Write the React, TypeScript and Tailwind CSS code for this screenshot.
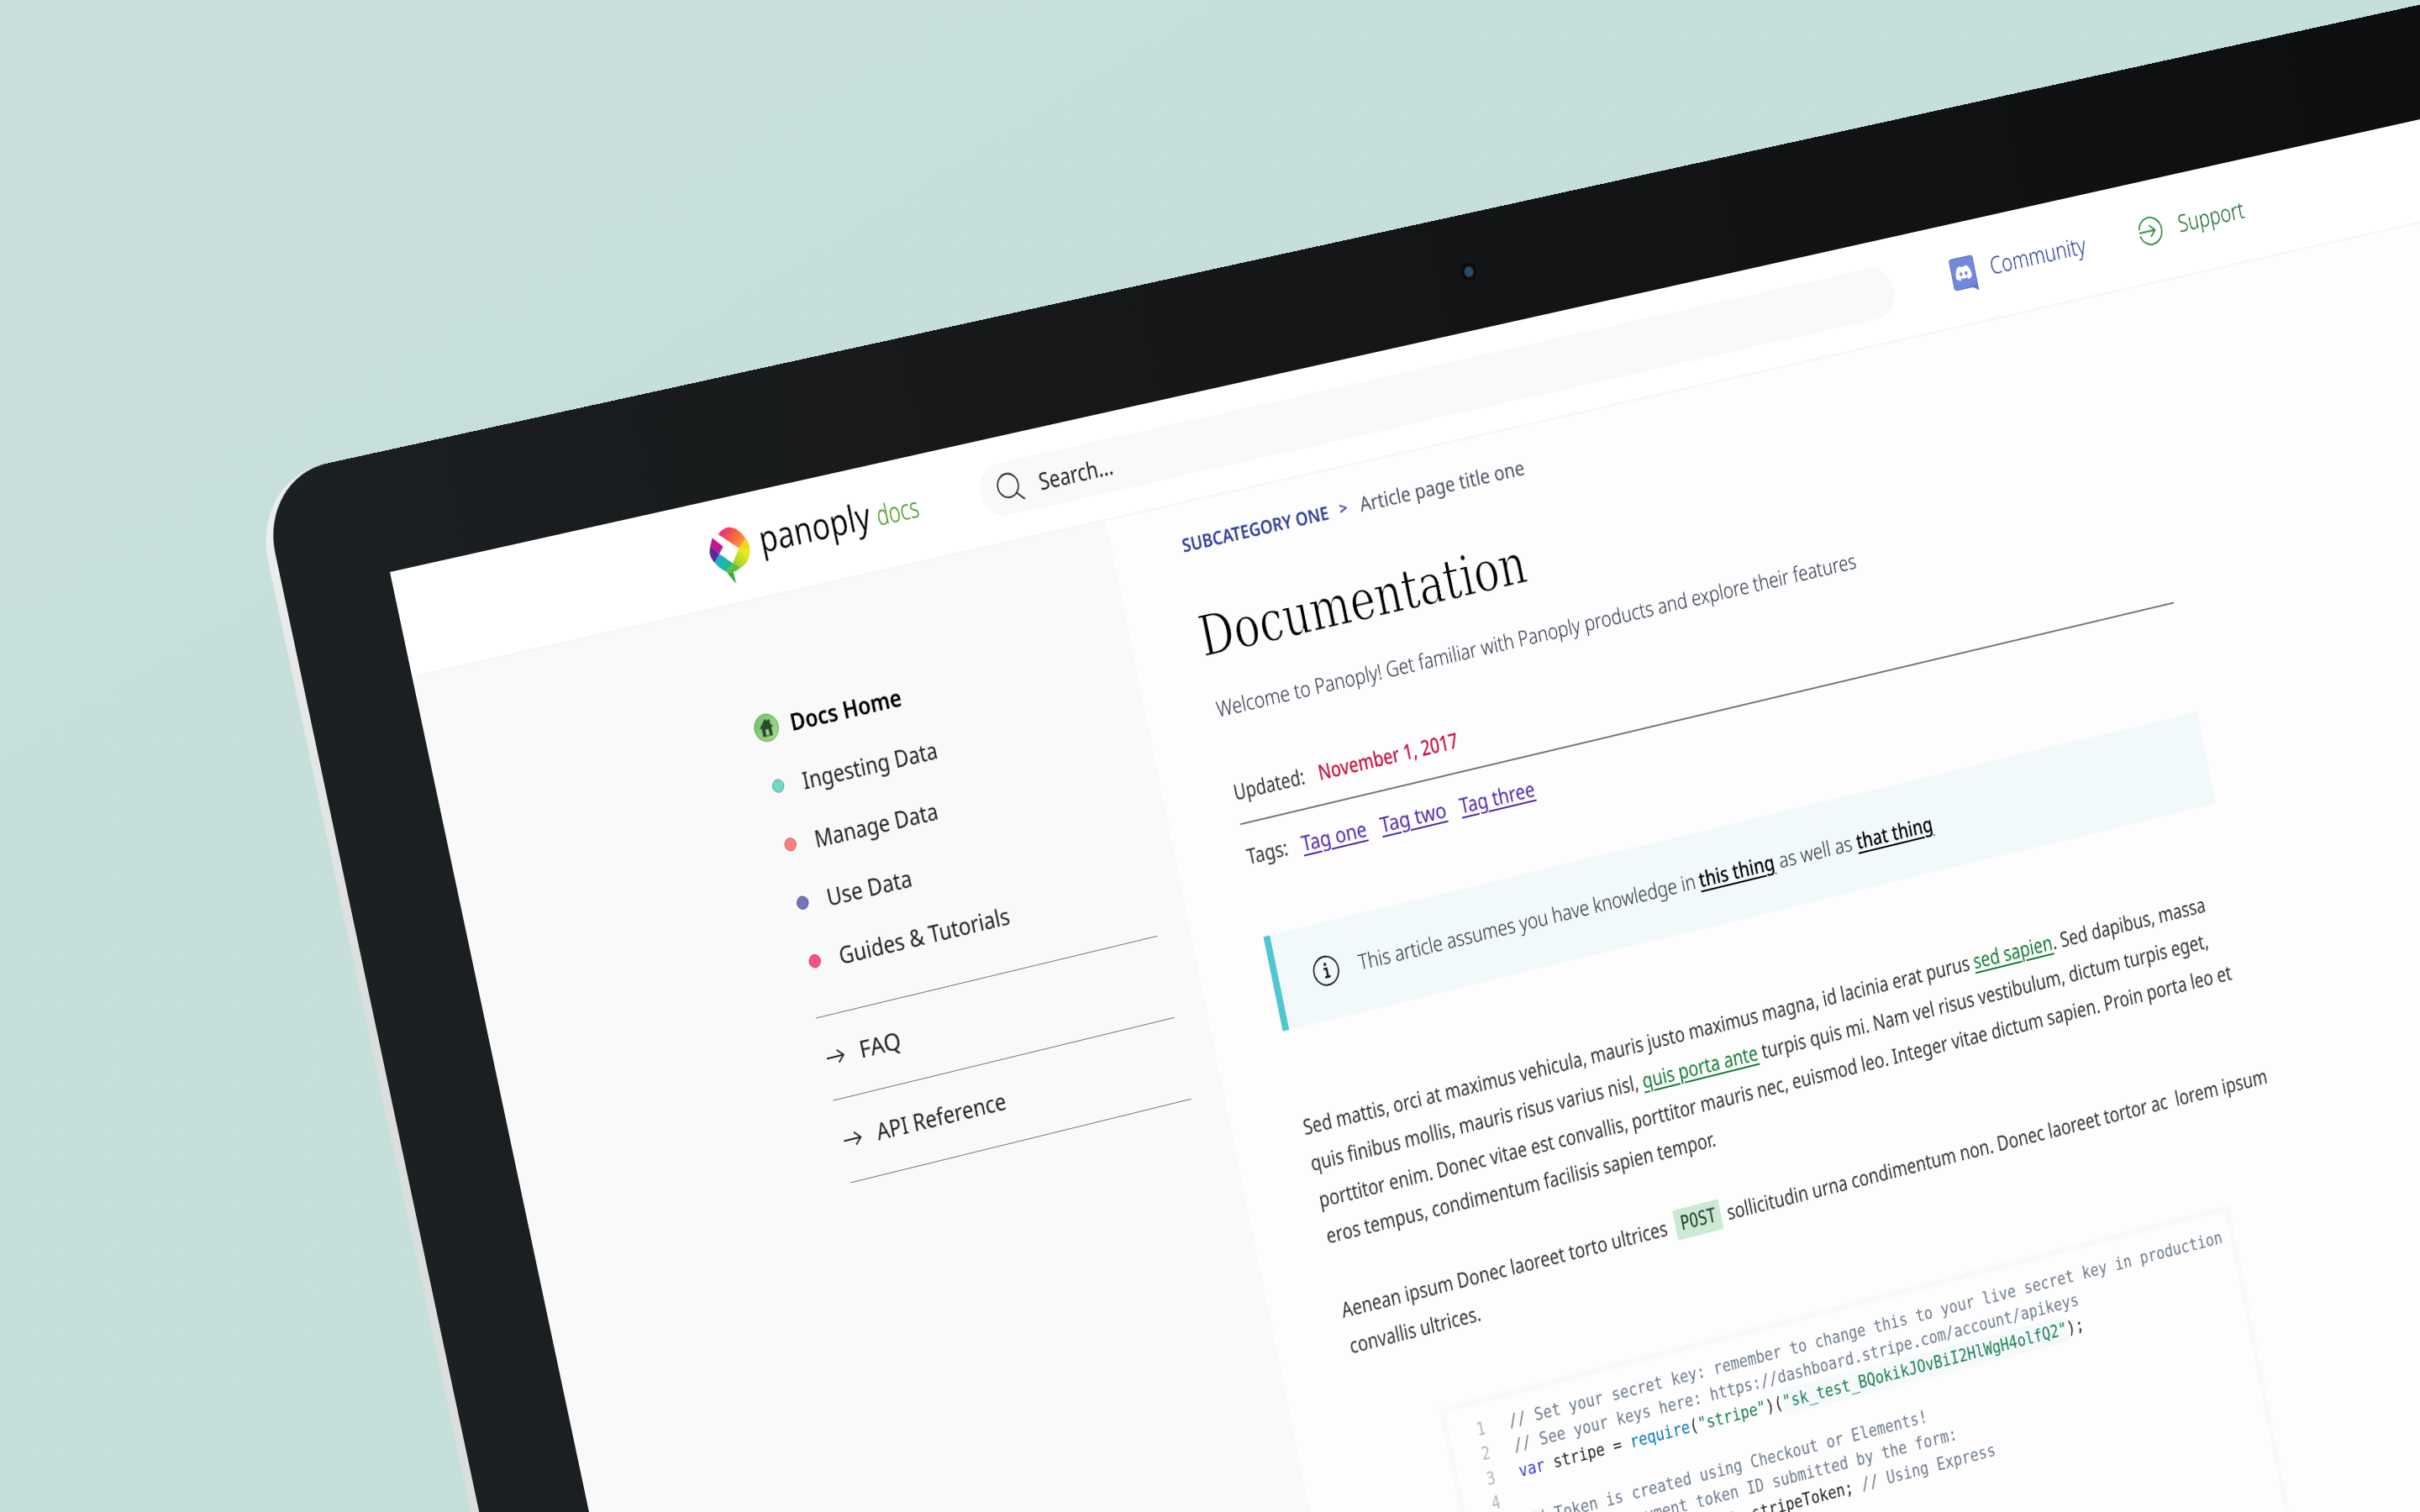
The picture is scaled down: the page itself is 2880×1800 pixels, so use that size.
import React, { useLayoutEffect, useRef } from "react";
import { FaDiscord } from "react-icons/fa";

type Point = [number, number];

/* Size of the flat area that is projected onto the four corner points. */
const PLANE_W = 2300;
const PLANE_H = 1250;
const CORNERS: [Point, Point, Point, Point] = [
  [464, 681],
  [2416.3, 245.4],
  [2652.3, 1435],
  [728.8, 1931.4],
];

/* Projective transform that carries the flat rectangle onto a quadrilateral. */
function projection(w: number, h: number, [p0, p1, p2, p3]: typeof CORNERS) {
  const dx1 = p1[0] - p2[0];
  const dx2 = p3[0] - p2[0];
  const dy1 = p1[1] - p2[1];
  const dy2 = p3[1] - p2[1];
  const sx = p0[0] - p1[0] + p2[0] - p3[0];
  const sy = p0[1] - p1[1] + p2[1] - p3[1];
  const det = dx1 * dy2 - dx2 * dy1;
  const g = (sx * dy2 - dx2 * sy) / det;
  const k = (dx1 * sy - sx * dy1) / det;
  const a = (p1[0] - p0[0] + g * p1[0]) / w;
  const b = (p3[0] - p0[0] + k * p3[0]) / h;
  const d = (p1[1] - p0[1] + g * p1[1]) / w;
  const e = (p3[1] - p0[1] + k * p3[1]) / h;
  return `matrix3d(${a},${d},0,${g / w},${b},${e},0,${k / h},0,0,1,0,${p0[0]},${p0[1]},0,1)`;
}

/* One line of text, condensed or widened to the width of its box. */
function Fit({ className = "", children }: { className?: string; children: React.ReactNode }) {
  const box = useRef<HTMLDivElement>(null);
  const text = useRef<HTMLSpanElement>(null);
  useLayoutEffect(() => {
    if (box.current && text.current) {
      const s = box.current.clientWidth / text.current.offsetWidth;
      text.current.style.transform = `scaleX(${s})`;
    }
  }, []);
  return (
    <div ref={box} className={`flex shrink-0 ${className}`}>
      <span ref={text} className="shrink-0 origin-left whitespace-pre">
        {children}
      </span>
    </div>
  );
}

function Logo() {
  return (
    <svg className="h-[66px] w-[54px] overflow-visible" viewBox="0 0 54 66">
      <defs>
        <linearGradient id="warm" x1="0" y1="0" x2="1" y2="1">
          <stop offset="0" stopColor="#f0148c" />
          <stop offset=".5" stopColor="#f7653f" />
          <stop offset="1" stopColor="#fbb03b" />
        </linearGradient>
        <linearGradient id="lime" x1="1" y1="0" x2="0" y2="1">
          <stop offset="0" stopColor="#fdf100" />
          <stop offset=".4" stopColor="#e6e61e" />
          <stop offset="1" stopColor="#7cc142" />
        </linearGradient>
        <linearGradient id="sea" x1="0" y1="0" x2="1" y2="1">
          <stop offset="0" stopColor="#1aa9d6" />
          <stop offset=".6" stopColor="#1cb9a8" />
          <stop offset="1" stopColor="#35b04a" />
        </linearGradient>
      </defs>
      <path d="M16.4 5.5Q23 0 31 0Q44 2 50.9 17.3L39.6 26.4Z" fill="url(#warm)" />
      <path d="M39.6 26.4L50.9 17.3Q54.5 23 53.6 29.5Q51 46 35 49.5Q30 52 25.8 52.1L27.5 42Z" fill="url(#lime)" />
      <path d="M50.9 17.3Q54.5 23 53.6 29.5L39.6 26.4Z" fill="#f7c928" fillOpacity=".7" />
      <path d="M7.8 8.1L19.6 20.8L12.5 28.1L3.1 16.5Z" fill="#c4178f" />
      <path d="M3.1 16.5L12.5 28.1L4.2 37.1Q.5 32 .2 25.6Q.6 21 3.1 16.5Z" fill="#5a2a94" />
      <path d="M12.5 28.1L27.5 42L16.5 49.9Q8 44 4.2 37.1Z" fill="url(#sea)" />
      <path d="M27.5 42L36 49.2Q31 52 25.8 52.1L26.3 65.9L16.5 49.9Z" fill="#5bbd45" />
      <path d="M25.8 52.1L26.3 65.9L19 54Z" fill="#3da53a" />
    </svg>
  );
}

function Arrow() {
  return (
    <svg className="h-[18px] w-[24px]" viewBox="0 0 24 18" fill="none" stroke="#222" strokeWidth="1.8">
      <path d="M0 9H23M15 1.5L23 9L15 16.5" />
    </svg>
  );
}

function HomeIcon() {
  return (
    <svg className="size-[33px]" viewBox="0 0 33 33">
      <defs>
        <linearGradient id="leaf" x1="0" y1="0" x2="1" y2="1">
          <stop offset="0" stopColor="#6fbf6b" />
          <stop offset="1" stopColor="#a9dd8f" />
        </linearGradient>
      </defs>
      <circle cx="16.5" cy="16.5" r="16" fill="url(#leaf)" stroke="#5e9a56" strokeWidth="1" />
      <path d="M16.5 6L7 16.5H10V26.5H23V16.5H26L22.5 12.6V7.5H19.5V9.3Z" fill="#2b4a2c" />
      <path d="M14.5 18.5h4.4v7h-4.4z" fill="#9ad58a" />
    </svg>
  );
}

const NAV = [
  { label: "Ingesting Data", dot: "bg-[#72d7c6] border-[#4fa598]", w: "w-[184px]" },
  { label: "Manage Data", dot: "bg-[#f98080] border-[#c95f5f]", w: "w-[168px]" },
  { label: "Use Data", dot: "bg-[#7474bb] border-[#484890]", w: "w-[116px]" },
  { label: "Guides & Tutorials", dot: "bg-[#f7508a] border-[#c23265]", w: "w-[234px]" },
];

const LINKS = [
  { label: "FAQ", w: "w-[56px]" },
  { label: "API Reference", w: "w-[178px]" },
];

function Header() {
  return (
    <header className="flex h-[125px] shrink-0 items-center border-b-2 border-[#f5f5f5] bg-white pl-[415px]">
      <div className="pt-[12px]">
        <Logo />
      </div>
      <Fit className="-mt-[11px] ml-[14px] w-[151px] text-[44px] leading-[60px] font-normal text-black [-webkit-text-stroke:0.5px_#ffffff]">
        panoply
      </Fit>
      <Fit className="-mt-[4px] ml-[9px] w-[57px] text-[33px] leading-[60px] font-light text-[#3f8f14]">docs</Fit>
      <div className="ml-[85px] flex h-[62px] w-[1299px] items-center rounded-full bg-[#f9f9f9] pl-[24px]">
        <svg className="size-[35px]" viewBox="0 0 35 35" fill="none" stroke="#222" strokeWidth="1.8">
          <circle cx="15" cy="15" r="14" />
          <path d="M24.5 25.5L34 35" />
        </svg>
        <Fit className="ml-[22px] w-[102px] text-[28px] text-[#222]">Search...</Fit>
      </div>
      <div className="ml-[86px] flex items-center">
        <div className="relative flex h-[37px] w-[33px] items-center justify-center rounded-[3px] bg-[#7289da] ring-1 ring-[#5a6fc4]">
          <FaDiscord className="size-[25px] text-white" />
          <svg className="absolute -right-px -bottom-[6px] h-[8px] w-[11px]" viewBox="0 0 11 8">
            <path d="M0 1L11 8V0Z" fill="#6077cf" />
          </svg>
        </div>
        <Fit className="-mt-[3px] ml-[23px] w-[141px] text-[29px] font-light text-[#26389a]">Community</Fit>
      </div>
      <div className="ml-[79px] flex items-center">
        <svg className="size-[35px]" viewBox="0 0 34 34" fill="none" stroke="#2b8038" strokeWidth="1.8">
          <path d="M1.4 13.5A16 16 0 1 1 1.4 20.5M1 17H23M16.5 10L23.5 17L16.5 24" />
        </svg>
        <Fit className="-mt-[3px] ml-[24px] w-[98px] text-[29px] font-light text-[#0f651e]">Support</Fit>
      </div>
    </header>
  );
}

function Sidebar() {
  return (
    <aside className="w-[944px] shrink-0 bg-[#f9f9f9] pt-[113px] text-[28px] text-[#222]">
      <nav className="ml-[424px]">
        <div className="flex h-[70px] items-center">
          <div className="flex w-[34px] justify-center">
            <HomeIcon />
          </div>
          <Fit className="ml-[16px] w-[152px] font-semibold text-black">Docs Home</Fit>
        </div>
        {NAV.map((n) => (
          <div key={n.label} className="flex h-[70px] items-center">
            <div className="flex w-[34px] justify-center">
              <span className={`size-[16px] rounded-full border ${n.dot}`} />
            </div>
            <Fit className={`ml-[16px] ${n.w}`}>{n.label}</Fit>
          </div>
        ))}
      </nav>
      <div className="mt-[30px] ml-[427px] w-[472px] border-t-[1.5px] border-[#777]">
        {LINKS.map((n) => (
          <div key={n.label} className="flex h-[99px] items-center border-b-[1.5px] border-[#777] pb-[4px]">
            <div className="flex w-[31px] items-center pt-[3px] pl-[3px]">
              <Arrow />
            </div>
            <Fit className={`ml-[17px] ${n.w}`}>{n.label}</Fit>
          </div>
        ))}
      </div>
    </aside>
  );
}

function Green({ children }: { children: React.ReactNode }) {
  return <span className="text-[#0f7a30] underline decoration-[1.5px] underline-offset-[4px]">{children}</span>;
}

const TAGS = [
  { label: "Tag one", w: "w-[91px]" },
  { label: "Tag two", w: "w-[93px]" },
  { label: "Tag three", w: "w-[107px]" },
];

function C({ children }: { children: React.ReactNode }) {
  return <span className="text-[#6d7b8d]">{children}</span>;
}

const CODE: React.ReactNode[] = [
  <C>// Set your secret key: remember to change this to your live secret key in production</C>,
  <C>// See your keys here: https://dashboard.stripe.com/account/apikeys</C>,
  <>
    <span className="text-[#3d3ddb]">var</span> stripe = <span className="text-[#0a76b8]">require</span>(
    <span className="text-[#15804d]">"stripe"</span>)(
    <span className="bg-[#f6f9fb] py-[4px] text-[#15804d]">"sk_test_BQokikJOvBiI2HlWgH4olfQ2"</span>);
  </>,
  " ",
  <C>// Token is created using Checkout or Elements!</C>,
  <C>// Get the payment token ID submitted by the form:</C>,
  <>
    <span className="text-[#3d3ddb]">var</span> token = request.body.stripeToken; <C>// Using Express</C>
  </>,
];

function Code() {
  return (
    <div className="mt-[77px] ml-[106px] h-[600px] w-[1154px] border-[7px] border-[#f9f9f9] bg-[#fdfdfd] pt-[15px] font-['DejaVu_Sans_Mono',monospace] text-[20.42px] leading-[30.4px] text-[#222]">
      {CODE.map((line, i) => (
        <div key={i} className="flex whitespace-pre">
          <span className="ml-[38px] w-[46px] text-[#b4b7bb]">{i + 1}</span>
          <span>{line}</span>
        </div>
      ))}
    </div>
  );
}

function Article() {
  const mark = "font-medium text-black underline decoration-[1.5px] underline-offset-[4px]";
  return (
    <main className="flex-1 bg-[#fdfdfd] pt-[28px] pl-[96px] text-[25.5px] text-[#333]">
      <div className="flex h-[40px] items-center text-[24.5px] text-[#4a5160]">
        <Fit className="-ml-px w-[206px] text-[22px] font-semibold text-[#2d3e94]">SUBCATEGORY ONE</Fit>
        <Fit className="ml-[15px] w-[11px] text-[20px] font-semibold text-[#2d3e94]">&gt;</Fit>
        <Fit className="ml-[18px] w-[234px]">Article page title one</Fit>
      </div>
      <h1 className="mt-[52px] flex h-[80px] items-center font-['DejaVu_Serif',serif] text-[67px] text-black [-webkit-text-stroke:1.5px_#fdfdfd]">
        <Fit className="-ml-[3px] w-[461px]">Documentation</Fit>
      </h1>
      <div className="mt-[27px] flex h-[40px] items-center font-light text-[#252e40]">
        <Fit className="w-[915px]">
          Welcome to Panoply! Get familiar with Panoply products and explore their features
        </Fit>
      </div>
      <div className="mt-[61px] flex h-[40px] items-center">
        <Fit className="w-[99px]">Updated:</Fit>
        <Fit className="ml-[20px] w-[197px] font-medium text-[#c8103c]">November 1, 2017</Fit>
      </div>
      <div className="mt-[18px] h-[1.5px] w-[1352px] bg-[#777]" />
      <div className="mt-[19px] flex h-[40px] items-center">
        <Fit className="w-[57px]">Tags:</Fit>
        <div className="ml-[20px] flex gap-[20px] text-[#5226ab]">
          {TAGS.map((t) => (
            <Fit key={t.label} className={`underline decoration-[1.5px] underline-offset-[4px] ${t.w}`}>
              {t.label}
            </Fit>
          ))}
        </div>
      </div>
      <div className="mt-[77px] flex h-[115px] w-[1355px] items-center border-l-[9px] border-[#50c6d0] bg-[#f1f9fa]">
        <svg className="ml-[48px] size-[36px]" viewBox="0 0 36 36" fill="none" stroke="#111" strokeWidth="1.8">
          <circle cx="18" cy="18" r="17" />
          <path d="M15 15.5H19V25M15 25.5H22.5" strokeWidth="2.6" />
          <circle cx="18" cy="10.2" r="1.9" fill="#111" stroke="none" />
        </svg>
        <div className="-mt-[2px] ml-[28px] flex font-light text-[#232a38]">
          <Fit className="w-[482px]">This article assumes you have knowledge in</Fit>
          <Fit className={`ml-[5px] w-[109px] ${mark}`}>this thing</Fit>
          <Fit className="ml-[7px] w-[106px]">as well as</Fit>
          <Fit className={`ml-[7px] w-[111px] ${mark}`}>that thing</Fit>
        </div>
      </div>
      <div className="mt-[95px] leading-[44.6px]">
        <Fit className="ml-px w-[1310px]">
          Sed mattis, orci at maximus vehicula, mauris justo maximus magna, id lacinia erat purus{" "}
          <Green>sed sapien</Green>. Sed dapibus, massa
        </Fit>
        <Fit className="ml-px w-[1304px]">
          quis finibus mollis, mauris risus varius nisl, <Green>quis porta ante</Green> turpis quis mi. Nam vel risus
          vestibulum, dictum turpis eget,
        </Fit>
        <Fit className="ml-[2px] w-[1327px]">
          porttitor enim. Donec vitae est convallis, porttitor mauris nec, euismod leo. Integer vitae dictum sapien.
          Proin porta leo et
        </Fit>
        <Fit className="ml-[2px] w-[556px]">eros tempus, condimentum facilisis sapien tempor.</Fit>
      </div>
      <div className="mt-[46px] ml-[2px] leading-[44.6px]">
        <div className="flex items-center">
          <Fit className="w-[465px]">Aenean ipsum Donec laoreet torto ultrices</Fit>
          <div className="ml-[12px] flex h-[37px] w-[66px] items-center justify-center rounded-[3px] bg-[#cbe9d3]">
            <Fit className="w-[51px] font-['DejaVu_Sans_Mono',monospace] text-[24px] text-[#1d3b28]">POST</Fit>
          </div>
          <Fit className="ml-[9px] w-[797px]">
            {"sollicitudin urna condimentum non. Donec laoreet tortor ac  lorem ipsum"}
          </Fit>
        </div>
        <Fit className="ml-px w-[186px]">convallis ultrices.</Fit>
      </div>
      <Code />
    </main>
  );
}

export default function App() {
  return (
    <div className="relative h-[1800px] w-[2880px] overflow-hidden bg-linear-to-br from-[#c9dfdc] via-[#c5dfda] to-[#c2ded6] font-['Noto_Sans',sans-serif]">
      <div
        className="absolute top-0 left-0 size-0 origin-top-left"
        style={{ transform: projection(PLANE_W, PLANE_H, CORNERS) }}
      >
        <div className="-mt-[138px] -ml-[151px] h-[2100px] w-[3300px] rounded-tl-[94px] bg-linear-to-b from-[#eef0f0] from-0% via-[#dcdedd] via-[30%] to-[#dcdedd] pl-[11px]">
          <div className="h-full w-full rounded-tl-[88px] bg-linear-to-r from-[#1b2022] from-0% via-[#171819] via-[30%] to-[#0c0d0e] pt-[138px] pl-[140px]">
            <div className="absolute -top-[79px] left-[1492px] flex size-[18px] items-center justify-center rounded-full bg-[#0b0c0d] ring-2 ring-[#0c0d0e]">
              <div className="flex size-[13px] items-center justify-center rounded-full bg-[#3a4448]">
                <div className="size-[9px] rounded-full bg-[#1f4d78]" />
              </div>
            </div>
            <div className="flex h-[1900px] w-[3000px] flex-col">
              <Header />
              <div className="flex flex-1">
                <Sidebar />
                <Article />
              </div>
            </div>
          </div>
        </div>
      </div>
    </div>
  );
}
